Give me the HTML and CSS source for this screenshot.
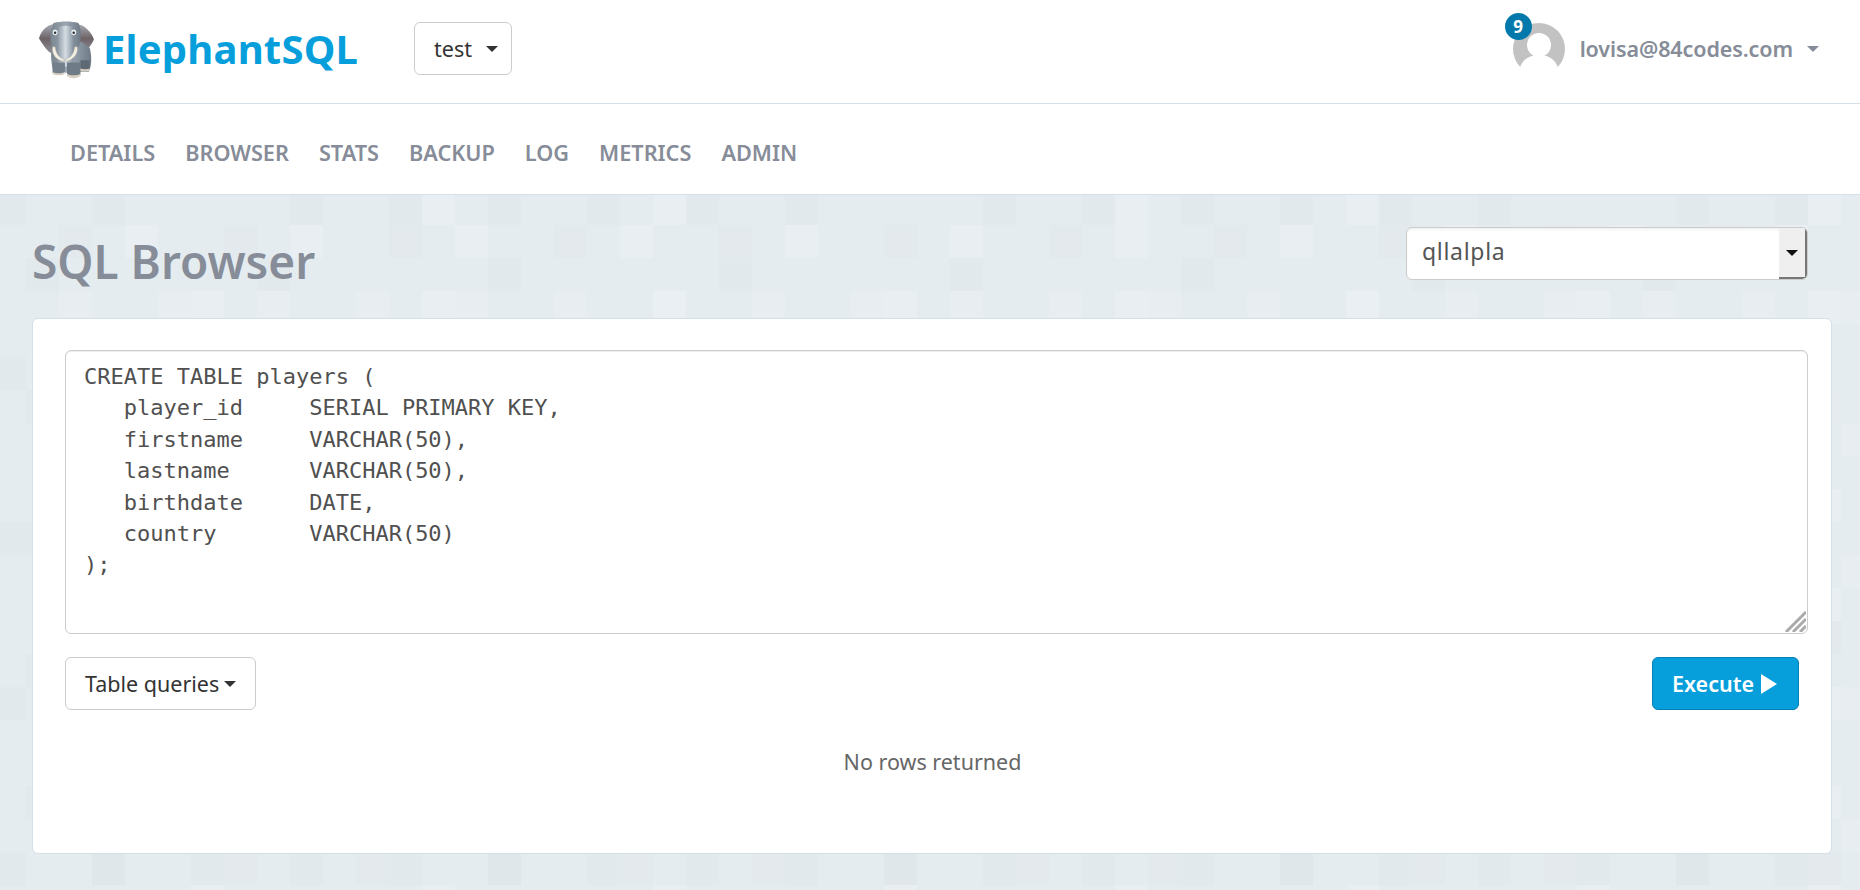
FILE: index.html
```html
<!DOCTYPE html>
<html lang="en">
<head>
<meta charset="utf-8">
<title>SQL Browser - ElephantSQL</title>
<link rel="stylesheet" href="styles.css">
</head>
<body>
<header class="topbar">
  <a class="brand" href="#">
    <svg class="elephant" viewBox="0 0 54 58" width="56" height="60" aria-hidden="true">
      <defs>
        <linearGradient id="eleBody" x1="0" x2="1" y1="0" y2="0">
          <stop offset="0" stop-color="#79858f"/>
          <stop offset="0.5" stop-color="#9aa7b2"/>
          <stop offset="1" stop-color="#6e7a85"/>
        </linearGradient>
        <linearGradient id="eleTrunk" x1="0" x2="1" y1="0" y2="0">
          <stop offset="0" stop-color="#8f9ca8"/>
          <stop offset="0.5" stop-color="#d5dde3"/>
          <stop offset="1" stop-color="#8a97a3"/>
        </linearGradient>
        <linearGradient id="eleEar" x1="0" x2="0" y1="0" y2="1">
          <stop offset="0" stop-color="#a7adb3"/>
          <stop offset="0.5" stop-color="#6d6266"/>
          <stop offset="1" stop-color="#8d8f96"/>
        </linearGradient>
      </defs>
      <path d="M14 3C7 4 1 11 0 17c3 5 7 11 11 14l5-8z" fill="url(#eleEar)"/>
      <path d="M37 3c7 1 14 8 16 15-2 5-7 11-11 13l-6-8z" fill="url(#eleEar)"/>
      <path d="M12 24c-1 10 0 19 2 25h34c3-6 3-15 1-23l-8-6z" fill="url(#eleBody)"/>
      <path d="M14 2c7-2 17-2 24 0 3 6 3 14 1 21-2 5-5 8-6 13l-1 14H19l-1-14c-1-5-4-8-6-13-2-7-1-15 2-21z" fill="url(#eleBody)"/>
      <path d="M19 6c3-2 10-2 13 0 1 9 1 26 0 38h-13c-1-12-1-29 0-38z" fill="url(#eleTrunk)"/>
      <path d="M13 25c-1 7 3 13 11 14l.5-2c-5-1-8-5-9-12z" fill="#f3efe4" stroke="#aaa696" stroke-width=".4"/>
      <path d="M37 25c1 7-4 13-11 14l-.5-2c5-1 8-5 9-12z" fill="#f3efe4" stroke="#aaa696" stroke-width=".4"/>
      <ellipse cx="15.500" cy="11" rx="2.400" ry="2.700" fill="#e8edf0"/>
      <ellipse cx="33.500" cy="11" rx="2.400" ry="2.700" fill="#e8edf0"/>
      <circle cx="15.500" cy="11.300" r="1.200" fill="#2e3338"/>
      <circle cx="33.500" cy="11.300" r="1.200" fill="#2e3338"/>
      <path d="M13 40h12v10c-3 2-9 2-12 0z" fill="#737f8a"/>
      <path d="M27 40h13v12c-3 2-10 2-13 0z" fill="#6f7b86"/>
      <path d="M40 38h9v9c-2 2-7 2-9 0z" fill="#5e6973"/>
      <path d="M13 49c3 2 9 2 12 0v2c-3 2-9 2-12 0zM27 51c3 2 10 2 13 0v2c-3 3-10 3-13 0zM40 46c2 1 7 1 9 0v2c-2 1-7 1-9 0z" fill="#d8cfc2"/>
    </svg>
    <span class="brand-name">ElephantSQL</span>
  </a>
  <button class="btn team-btn" type="button">test<span class="caret caret-lg"></span></button>
  <div class="user">
    <span class="avatar">
      <svg viewBox="0 0 52 52" width="52" height="52" aria-hidden="true">
        <circle cx="26" cy="26" r="26" fill="#c2c2c2"/>
        <circle cx="26" cy="22" r="12" fill="#fff"/>
        <path d="M6 52c0-13 8-20 20-20s20 7 20 20z" fill="#fff"/>
      </svg>
      <span class="badge">9</span>
    </span>
    <span class="email">lovisa@84codes.com</span>
    <span class="caret caret-muted"></span>
  </div>
</header>
<nav class="subnav">
  <a href="#">DETAILS</a>
  <a href="#">BROWSER</a>
  <a href="#">STATS</a>
  <a href="#">BACKUP</a>
  <a href="#">LOG</a>
  <a href="#">METRICS</a>
  <a href="#">ADMIN</a>
</nav>
<main class="content">
  <div class="title-row">
    <h1>SQL Browser</h1>
    <div class="select">
      <span class="select-value">qllalpla</span>
      <span class="select-arrow"><span class="caret caret-small"></span></span>
    </div>
  </div>
  <section class="card">
    <div class="editor">
      <pre class="code">CREATE TABLE players (
   player_id     SERIAL PRIMARY KEY,
   firstname     VARCHAR(50),
   lastname      VARCHAR(50),
   birthdate     DATE,
   country       VARCHAR(50)
);</pre>
      <svg class="grip" viewBox="0 0 22 22" width="22" height="22" aria-hidden="true">
        <path d="M22 2 2 22M22 9 9 22M22 16 16 22" stroke="#aaa" stroke-width="3" fill="none"/>
      </svg>
    </div>
    <div class="actions">
      <button class="btn" type="button">Table queries<span class="caret caret-sm"></span></button>
      <button class="btn btn-primary" type="button">Execute<svg class="play" viewBox="0 0 16 20" width="16" height="20" aria-hidden="true"><path d="M0 0 16 10 0 20z" fill="#fff"/></svg></button>
    </div>
    <p class="empty">No rows returned</p>
  </section>
</main>
</body>
</html>
```
FILE: styles.css
```css
* { box-sizing: border-box; }
html, body { margin: 0; height: 100%; }
body {
  font-family: "Noto Sans", "Open Sans", sans-serif;
  color: #333;
  font-size: 21.5px;
  background-color: #e5ecf0;
  overflow: hidden;
}
a { text-decoration: none; color: inherit; }

.topbar {
  height: 104px;
  background: #fff;
  border-bottom: 1px solid #d5dfe6;
  display: flex;
  align-items: center;
  padding: 0 41px 6px 39px;
}
.brand { display: flex; align-items: center; width: 375px; }
.elephant { flex: none; margin: 4px 8px 0 0; }
.brand-name {
  font-size: 40px;
  font-weight: 700;
  color: #069fdb;
  letter-spacing: .2px;
}
.btn {
  height: 53px;
  padding: 0 19px;
  border: 1px solid #ccc;
  border-radius: 6px;
  background: #fff;
  color: #333;
  font: inherit;
  display: inline-flex;
  align-items: center;
}
.team-btn { width: 98px; height: 53px; }
.caret {
  display: inline-block;
  width: 0;
  height: 0;
  border-left: 6px solid transparent;
  border-right: 6px solid transparent;
  border-top: 6px solid #333;
}
.caret-lg { margin-left: 14px; }
.caret-sm { margin-left: 5px; }
.caret-muted { border-top-color: #868c98; margin-left: 14px; }
.caret-small { border-top-color: #111; }

.user { margin-left: auto; display: flex; align-items: center; font-weight: 600; color: #868c98; letter-spacing: -.1px; }
.avatar { position: relative; width: 52px; height: 52px; margin-right: 15px; }
.avatar svg { display: block; }
.badge {
  position: absolute;
  left: -8px;
  top: -10px;
  width: 27px;
  height: 27px;
  border-radius: 50%;
  background: #0379ab;
  color: #fff;
  font-size: 17px;
  font-weight: 700;
  line-height: 27px;
  text-align: center;
}

.subnav {
  height: 91px;
  background: #fff;
  border-bottom: 1px solid #d5dfe6;
  display: flex;
  align-items: center;
  padding: 6px 0 0 70px;
  gap: 30px;
  font-size: 21.700px;
  font-weight: 600;
  color: #868c98;
}

.content {
  height: 695px;
  padding: 32px 28px 0 32px;
  background-color: #e5ecf0;
  background-image:
    conic-gradient(at 33px 33px, transparent 75%, rgba(120,140,150,.03) 0),
    conic-gradient(at 33px 33px, transparent 75%, rgba(120,140,150,.025) 0),
    conic-gradient(at 33px 33px, transparent 75%, rgba(120,140,150,.03) 0),
    conic-gradient(at 33px 33px, transparent 75%, rgba(120,140,150,.025) 0),
    conic-gradient(at 33px 33px, transparent 75%, rgba(255,255,255,.1) 0),
    conic-gradient(at 33px 33px, transparent 75%, rgba(255,255,255,.08) 0),
    conic-gradient(at 33px 33px, transparent 75%, rgba(255,255,255,.11) 0),
    conic-gradient(at 33px 33px, transparent 75%, rgba(255,255,255,.08) 0);
  background-size: 99px 165px, 165px 99px, 231px 132px, 132px 231px, 165px 231px, 99px 132px, 231px 99px, 132px 165px;
  background-position: -7px -3px, 59px 30px, 26px 63px, 92px -36px, 125px 30px, -40px 96px, 191px -3px, 59px 129px;
}
.title-row {
  height: 91px;
  display: flex;
  align-items: flex-start;
  justify-content: space-between;
  padding-right: 24px;
}
h1 {
  margin: 5px 0 0;
  font-size: 46px;
  font-weight: 600;
  line-height: 58px;
  color: #868c98;
}
.select {
  width: 402px;
  height: 53px;
  background: #fff;
  border: 1px solid #ccc;
  border-radius: 6px;
  display: flex;
  overflow: hidden;
  box-shadow: inset 0 2px 2px rgba(0,0,0,.05);
}
.select-value { flex: 1; padding-left: 15px; line-height: 47px; color: #555; font-size: 23px; letter-spacing: .7px; }
.select-arrow {
  width: 28px;
  background: #efefef;
  border-right: 2px solid #777;
  border-bottom: 2px solid #777;
  display: flex;
  align-items: center;
  justify-content: center;
}

.card {
  height: 536px;
  background: #fff;
  border: 1px solid #d5dfe6;
  border-radius: 6px;
  padding: 31px 23px 0 32px;
}
.editor {
  position: relative;
  height: 284px;
  border: 1px solid #ccc;
  border-radius: 6px;
  padding: 10px 18px;
  box-shadow: inset 0 1px 1px rgba(0,0,0,.075);
}
.code {
  margin: 0;
  font-family: "DejaVu Sans Mono", monospace;
  font-size: 22px;
  line-height: 31.4px;
  color: #505050;
}
.grip { position: absolute; right: 1px; bottom: 1px; }
.actions {
  display: flex;
  justify-content: space-between;
  margin-top: 23px;
  padding-right: 9px;
}
.btn-primary {
  background: #069fdb;
  border-color: #0480b3;
  color: #fff;
  font-weight: 600;
  padding-right: 21px;
}
.play { margin-left: 7px; }
.empty {
  margin: 37px 8px 0 0;
  text-align: center;
  color: #666;
}
```
